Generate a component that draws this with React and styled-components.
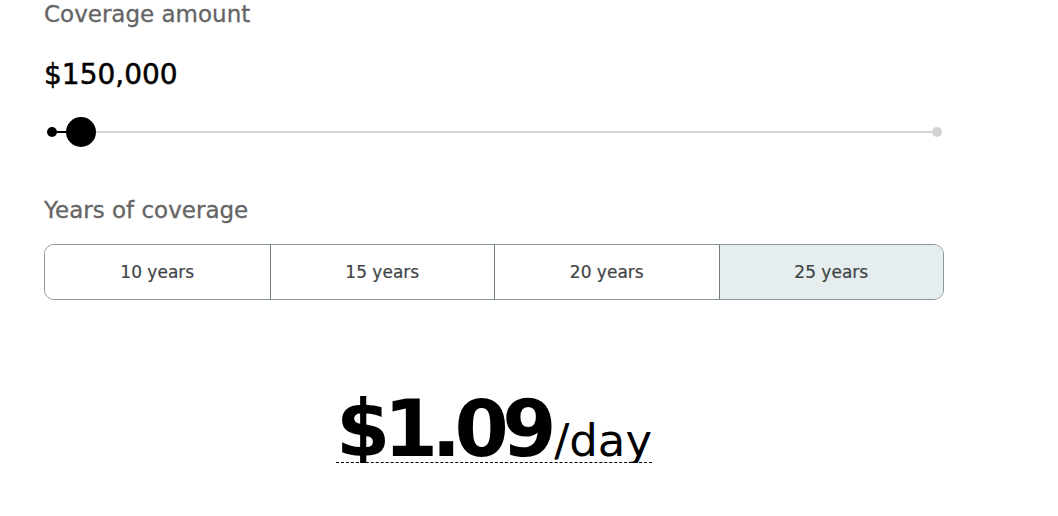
import React, { useState } from "react";
import styled, { createGlobalStyle } from "styled-components";

const GlobalStyle = createGlobalStyle`
  html, body {
    margin: 0;
    padding: 0;
    background: #ffffff;
  }
  body {
    font-family: "DejaVu Sans", "Liberation Sans", sans-serif;
  }
`;

const YEARS = [10, 15, 20, 25];
const MIN = 100000;
const MAX = 1650000;

const App = () => {
  const [years, setYears] = useState(25);
  const amount = 150000;
  const pct = ((amount - MIN) / (MAX - MIN)) * 100;

  return (
    <>
      <GlobalStyle />
      <Page>
        <Label>Coverage amount</Label>
        <Amount>${amount.toLocaleString("en-US")}</Amount>
        <Slider>
          <Dot />
          <Fill style={{ width: `calc(${pct}% - 20px)` }} />
          <Thumb />
          <Track />
          <Dot muted />
        </Slider>

        <Label spaced>Years of coverage</Label>
        <Segments>
          {YEARS.map((y) => (
            <Segment
              key={y}
              $active={y === years}
              onClick={() => setYears(y)}
            >
              {y} years
            </Segment>
          ))}
        </Segments>

        <PriceRow>
          <Price>
            <Big>$1.09</Big>
            <Unit>/day</Unit>
          </Price>
        </PriceRow>
      </Page>
    </>
  );
};

export default App;

const Page = styled.div`
  width: 900px;
  padding-left: 44px;
  display: flex;
  flex-direction: column;
`;

const Label = styled.div`
  font-size: 23px;
  line-height: 28px;
  color: #646464;
  -webkit-text-stroke: 0.3px #646464;
  margin-top: ${({ spaced }) => (spaced ? "49px" : "0")};
`;

const Amount = styled.div`
  margin-top: 30px;
  font-size: 28px;
  line-height: 34px;
  color: #000;
  -webkit-text-stroke: 0.5px #000;
`;

const Slider = styled.div`
  display: flex;
  align-items: center;
  height: 30px;
  margin: 25px 2px 0 3px;
`;

const Dot = styled.span`
  flex: none;
  width: 10px;
  height: 10px;
  border-radius: 50%;
  background: ${({ muted }) => (muted ? "#d3d3d3" : "#000")};
`;

const Fill = styled.span`
  flex: none;
  height: 2px;
  background: #000;
`;

const Thumb = styled.span`
  flex: none;
  width: 30px;
  height: 30px;
  border-radius: 50%;
  background: #000;
`;

const Track = styled.span`
  flex: 1;
  height: 2px;
  background: #d6d6d6;
`;

const Segments = styled.div`
  margin-top: 20px;
  display: grid;
  grid-template-columns: repeat(4, 1fr);
  border: 1px solid #89969a;
  border-radius: 10px;
  overflow: hidden;
  height: 56px;
  box-sizing: border-box;
`;

const Segment = styled.button`
  border: none;
  border-left: 1px solid #6f7c81;
  background: ${({ $active }) => ($active ? "#e6edef" : "#fff")};
  font-family: inherit;
  font-size: 17px;
  color: #3f4446;
  -webkit-text-stroke: 0.2px #3f4446;
  cursor: pointer;
  padding: 0;

  &:first-child {
    border-left: none;
  }
`;

const PriceRow = styled.div`
  display: flex;
  justify-content: center;
  margin-top: 96px;
`;

const Price = styled.div`
  display: flex;
  align-items: baseline;
  border-bottom: 1px dashed #000;
`;

const Big = styled.span`
  font-size: 78px;
  line-height: 66px;
  font-weight: 700;
  letter-spacing: -6.5px;
  padding-right: 4px;
  color: #000;
`;

const Unit = styled.span`
  font-size: 45px;
  line-height: 40px;
  color: #000;
`;
